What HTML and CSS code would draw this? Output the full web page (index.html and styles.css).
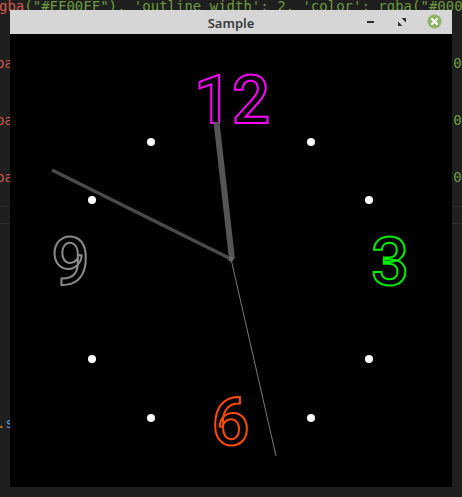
FILE: index.html
```html
<!DOCTYPE html>
<html>
<head>
<meta charset="utf-8">
<link rel="stylesheet" href="styles.css">
</head>
<body>
<div class="desktop">
  <div class="editor">
    <div class="line top"><span class="fn">gba</span><span class="str">("#FF00FF"), 'outline_width': 2, 'color': rgba("#000000")</span></div>
    <div class="line"></div>
    <div class="line"></div>
    <div class="line split"><span class="fn">ba</span><span class="str">00</span></div>
    <div class="line"></div>
    <div class="line"></div>
    <div class="line split"><span class="fn">ba</span><span class="str">00</span></div>
    <div class="line"></div>
    <div class="line"></div>
    <div class="line split"><span class="fn">ba</span><span class="str">00</span></div>
    <div class="line"></div>
    <div class="divider"></div>
    <div class="line"></div>
    <div class="line"></div>
    <div class="line"></div>
    <div class="line"></div>
    <div class="line"></div>
    <div class="line"></div>
    <div class="line"></div>
    <div class="line"></div>
    <div class="line"></div>
    <div class="line"></div>
    <div class="line tail"><span class="dot">.</span><span class="kw">s</span></div>
  </div>

  <div class="window">
    <div class="titlebar">
      <span class="title">Sample</span>
      <div class="controls">
        <span class="btn min"></span>
        <svg class="btn max" width="8" height="8" viewBox="0 0 8 8"><path d="M3.5 0H8V4.5Z M0 3.5V8H4.5Z" fill="#2e2e2e"/></svg>
        <svg class="btn close" width="15" height="15" viewBox="0 0 15 15"><circle cx="7.5" cy="7.5" r="7" fill="#8cb666"/><path d="M5 5L10 10M10 5L5 10" stroke="#fff" stroke-width="2" stroke-linecap="round"/></svg>
      </div>
    </div>
    <div class="canvas">
      <svg class="clock" width="442" height="453" viewBox="0 0 442 453">
        <g class="num">
          <text x="222" y="89" stroke="#ff00ff">12</text>
          <text x="380" y="251" stroke="#00ee00">3</text>
          <text x="220.5" y="411" stroke="#ff4a00">6</text>
          <text x="60.5" y="251" stroke="#8a8a8a">9</text>
        </g>
        <g fill="#ffffff">
          <circle cx="141" cy="108" r="4"/>
          <circle cx="301" cy="108" r="4"/>
          <circle cx="82" cy="166" r="4"/>
          <circle cx="359" cy="166" r="4"/>
          <circle cx="82" cy="325" r="4"/>
          <circle cx="359" cy="325" r="4"/>
          <circle cx="141" cy="384" r="4"/>
          <circle cx="301" cy="384" r="4"/>
        </g>
        <line x1="222" y1="225" x2="206.5" y2="88" stroke="#555555" stroke-width="6"/>
        <line x1="221" y1="225" x2="42" y2="136" stroke="#4a4a4a" stroke-width="3.5"/>
        <line x1="221" y1="225" x2="266" y2="422" stroke="#7a7a7a" stroke-width="1"/>
        <circle cx="221" cy="225" r="2.5" fill="#666"/>
      </svg>
    </div>
  </div>
</div>
</body>
</html>
```

FILE: styles.css
```css
html, body {
  margin: 0;
  padding: 0;
  background: #1f1f1f;
}
.desktop {
  position: relative;
  width: 462px;
  height: 497px;
  overflow: hidden;
  background: #1f1f1f;
}
.editor {
  margin-top: -3px;
  font-family: "DejaVu Sans Mono", "Liberation Mono", monospace;
  font-size: 14px;
}
.line {
  height: 19px;
  line-height: 19px;
  display: flex;
  white-space: pre;
}
.line.top {
  margin-left: -1px;
}
.line.split {
  justify-content: space-between;
  margin-left: -4px;
  margin-right: -8px;
}
.line.tail {
  margin-left: -3px;
}
.fn { color: #d7574c; }
.str { color: #6d9a3c; }
.dot { color: #d08a3c; }
.kw { color: #4f9fd6; }
.divider {
  height: 16px;
  border-top: 1px solid #2e2e2e;
  border-bottom: 1px solid #2e2e2e;
}
.window {
  position: absolute;
  left: 10px;
  top: 10px;
  width: 442px;
  height: 477px;
  display: flex;
  flex-direction: column;
  background: #000;
}
.titlebar {
  height: 24px;
  flex: none;
  background: #d6d6d6;
  display: flex;
  align-items: center;
  justify-content: center;
  position: relative;
}
.title {
  font-family: "Noto Sans", "DejaVu Sans", sans-serif;
  font-size: 13px;
  font-weight: 600;
  color: #3c3c3c;
  margin-top: 1px;
}
.controls {
  position: absolute;
  right: 10px;
  top: 4px;
  display: flex;
  align-items: center;
  height: 15px;
  gap: 0;
}
.btn { display: block; }
.min {
  width: 7px;
  height: 2px;
  background: #2e2e2e;
  margin-right: 24px;
}
.max {
  margin-right: 21px;
}
.canvas {
  flex: 1;
  background: #000;
}
.clock { display: block; }
.num text {
  font-family: Roboto, "Open Sans", sans-serif;
  font-size: 67px;
  font-weight: 500;
  fill: none;
  stroke-width: 2;
  text-anchor: middle;
}
```
